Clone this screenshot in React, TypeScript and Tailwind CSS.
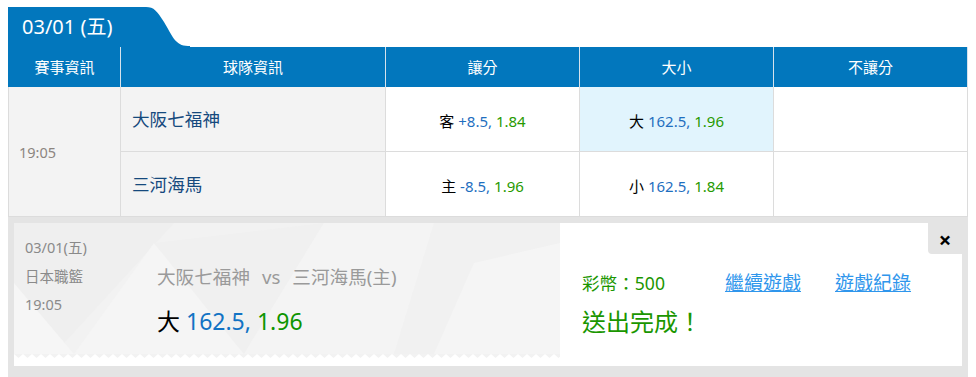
const font = { fontFamily: '"Noto Sans", "Noto Sans CJK TC", sans-serif' };

function Tab() {
  return (
    <div className="flex h-[40px] items-stretch">
      <div className="flex w-[134px] items-center bg-[#0277bd] pl-[14px] text-[20px] text-white">
        03/01 (五)
      </div>
      <svg width="48" height="40" viewBox="0 0 48 40" className="block">
        <path
          d="M0 0 H4 C12 0 15 4 22 15 C30 28 33 39 46 39 H48 V40 H0 Z"
          fill="#0277bd"
        />
      </svg>
    </div>
  );
}

const cols = "grid grid-cols-[112px_265px_194px_194px_194px]";

function Header() {
  const heads = ["賽事資訊", "球隊資訊", "讓分", "大小", "不讓分"];
  return (
    <div className={`${cols} border-l border-[#0277bd] bg-[#0277bd]`}>
      {heads.map((h) => (
        <div
          key={h}
          className="flex h-[40px] items-center justify-center border-r border-[#d6e2ec] text-[15px] text-white"
        >
          {h}
        </div>
      ))}
    </div>
  );
}

function Odds({ tag, line, price }: { tag: string; line: string; price: string }) {
  return (
    <span className="text-[15px]">
      <span className="text-black">{tag}</span>{" "}
      <span className="text-[#1f6fbf]">{line},</span>{" "}
      <span className="text-[#279a00]">{price}</span>
    </span>
  );
}

function Body() {
  const cell = "flex h-[65px] items-center border-r border-b border-[#dcdcdc]";
  const odds = `${cell} justify-center pt-[5px]`;
  return (
    <div className={`${cols} border-l border-[#dcdcdc]`}>
      <div className="row-span-2 flex items-center border-r border-b border-[#dcdcdc] bg-[#f3f3f3] pl-[10px] pt-[2px] text-[14.5px] text-[#8c8580]">
        19:05
      </div>
      <div className={`${cell} bg-[#f3f3f3] pl-[11px] text-[17.6px] text-[#15497d]`}>大阪七福神</div>
      <div className={`${odds} bg-white`}>
        <Odds tag="客" line="+8.5" price="1.84" />
      </div>
      <div className={`${odds} bg-[#e1f4fd]`}>
        <Odds tag="大" line="162.5" price="1.96" />
      </div>
      <div className={`${cell} bg-white`} />
      <div className={`${cell} bg-[#f3f3f3] pl-[11px] text-[17.6px] text-[#15497d]`}>三河海馬</div>
      <div className={`${odds} bg-white`}>
        <Odds tag="主" line="-8.5" price="1.96" />
      </div>
      <div className={`${odds} bg-white`}>
        <Odds tag="小" line="162.5" price="1.84" />
      </div>
      <div className={`${cell} bg-white`} />
    </div>
  );
}

function Pattern() {
  return (
    <svg className="absolute inset-0 h-full w-full" viewBox="0 0 546 131" preserveAspectRatio="none">
      <rect width="546" height="131" fill="#f2f2f2" />
      <polygon points="0,0 160,0 40,131 0,131" fill="#efefef" />
      <polygon points="60,131 140,20 230,131" fill="#f5f5f5" />
      <polygon points="140,20 310,0 230,131" fill="#f0f0f0" />
      <polygon points="310,0 420,0 380,131 230,131" fill="#f4f4f4" />
      <polygon points="420,0 546,0 546,131 380,131" fill="#f1f1f1" />
      <polygon points="460,40 546,20 546,131 420,131" fill="#f5f5f5" />
      <polygon points="0,60 60,131 0,131" fill="#f6f6f6" />
    </svg>
  );
}

function Zigzag() {
  const teeth = [];
  for (let i = 0; i < 61; i++) {
    const x = i * 9;
    teeth.push(`${x},0 ${x + 4.5},4 ${x + 9},0`);
  }
  return (
    <svg width="546" height="4" className="block">
      {teeth.map((p, i) => (
        <polygon key={i} points={p} fill="#f2f2f2" />
      ))}
    </svg>
  );
}

function Result() {
  return (
    <div className="bg-[#e4e4e4] px-[6px] pt-[6px] pb-[12px]">
      <div className="relative flex h-[143px] bg-white">
        <div className="flex w-[546px] flex-col">
          <div className="relative flex h-[131px] pl-[11px]">
            <Pattern />
            <div className="relative w-[132px] pt-[10px] text-[14.5px] leading-[28.5px] text-[#8a8a8a]">
              <div>03/01(五)</div>
              <div>日本職籃</div>
              <div>19:05</div>
            </div>
            <div className="relative pt-[39px]">
              <div className="text-[18.6px] leading-[30px] text-[#9a9a9a]">
                大阪七福神<span className="mx-[12px]">vs</span>三河海馬(主)
              </div>
              <div className="mt-[14px] text-[23px] leading-[30px]">
                <span className="text-black">大</span>{" "}
                <span className="text-[#1273c4]">162.5,</span>{" "}
                <span className="text-[#0d9400]">1.96</span>
              </div>
            </div>
          </div>
          <Zigzag />
        </div>
        <div className="flex-1 pl-[22px] pt-[47px]">
          <div className="flex items-center leading-[26px]">
            <span className="text-[17.6px] text-[#1a9600]">彩幣：500</span>
            <a href="#" className="ml-[60px] text-[19px] text-[#2f96ec] underline">繼續遊戲</a>
            <a href="#" className="ml-[34px] text-[19px] text-[#2f96ec] underline">遊戲紀錄</a>
          </div>
          <div className="mt-[10px] text-[24px] leading-[32px] text-[#1a9600]">送出完成！</div>
        </div>
        <button className="absolute top-0 right-0 flex h-[31px] w-[34px] items-center justify-center rounded-bl-[4px] bg-[#e4e4e4] text-[22px] font-bold leading-none text-black">
          ×
        </button>
      </div>
    </div>
  );
}

export default function App() {
  return (
    <div className="min-h-[377px] bg-white px-[8px] pt-[7px]" style={font}>
      <Tab />
      <Header />
      <Body />
      <Result />
    </div>
  );
}
